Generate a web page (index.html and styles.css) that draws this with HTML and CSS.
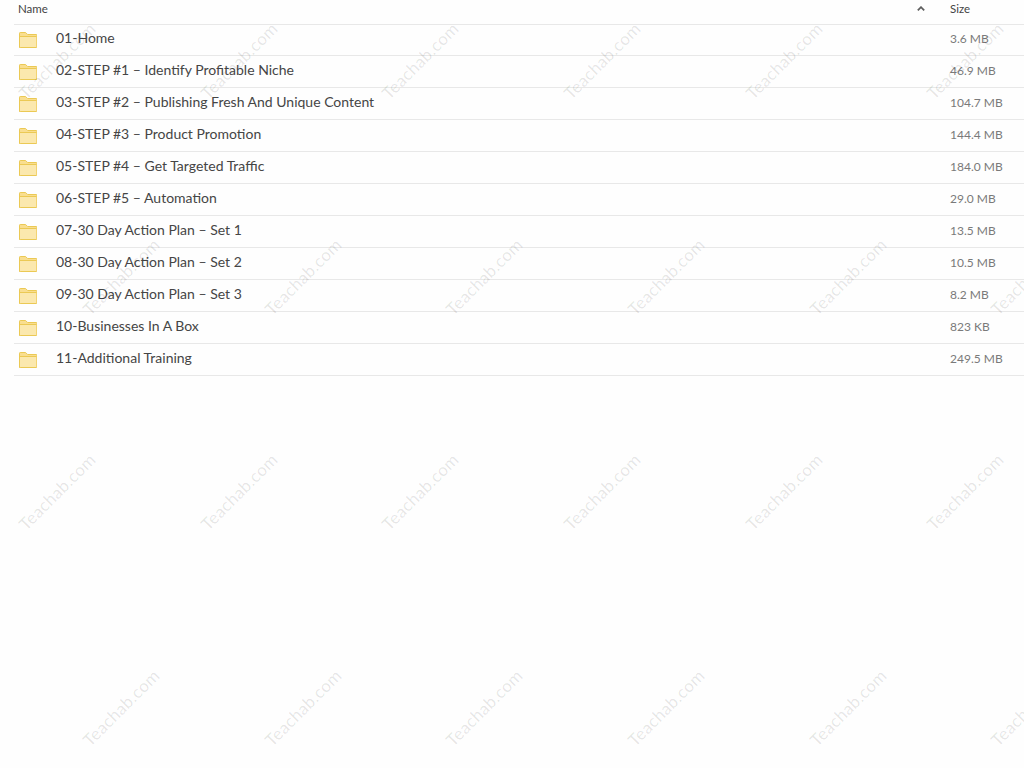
FILE: index.html
```html
<!DOCTYPE html>
<html lang="en">
<head>
<meta charset="utf-8">
<title>Files</title>
<link rel="stylesheet" href="styles.css">
</head>
<body>
<svg class="defs" width="0" height="0" aria-hidden="true">
  <symbol id="folder" viewBox="0 0 18 16">
    <path d="M.5 15.5V1.2q0-.7.7-.7h5.4l2 2h8.7q.7 0 .7.7v11.6q0 .7-.7.7H1.2q-.7 0-.7-.7z" fill="#f9de90" stroke="#ebc954"/>
    <path d="M1 4.5h16v10.5H1z" fill="#fbe8ae"/>
    <path d="M.5 4.5h17" fill="none" stroke="#ebc954"/>
  </symbol>
</svg>
<main class="table">
  <div class="head">
    <span class="name-col">Name</span>
    <svg class="sort" viewBox="0 0 8 5" aria-hidden="true"><path d="M.8 4.3 4 1.2l3.2 3.1" fill="none" stroke="#5f5f5f" stroke-width="1.8"/></svg>
    <span class="size-col">Size</span>
  </div>
  <div class="row"><svg class="icon"><use href="#folder"/></svg><span class="title">01-Home</span><span class="size">3.6 MB</span></div>
  <div class="row"><svg class="icon"><use href="#folder"/></svg><span class="title">02-STEP #1 – Identify Profitable Niche</span><span class="size">46.9 MB</span></div>
  <div class="row"><svg class="icon"><use href="#folder"/></svg><span class="title">03-STEP #2 – Publishing Fresh And Unique Content</span><span class="size">104.7 MB</span></div>
  <div class="row"><svg class="icon"><use href="#folder"/></svg><span class="title">04-STEP #3 – Product Promotion</span><span class="size">144.4 MB</span></div>
  <div class="row"><svg class="icon"><use href="#folder"/></svg><span class="title">05-STEP #4 – Get Targeted Traffic</span><span class="size">184.0 MB</span></div>
  <div class="row"><svg class="icon"><use href="#folder"/></svg><span class="title">06-STEP #5 – Automation</span><span class="size">29.0 MB</span></div>
  <div class="row"><svg class="icon"><use href="#folder"/></svg><span class="title">07-30 Day Action Plan – Set 1</span><span class="size">13.5 MB</span></div>
  <div class="row"><svg class="icon"><use href="#folder"/></svg><span class="title">08-30 Day Action Plan – Set 2</span><span class="size">10.5 MB</span></div>
  <div class="row"><svg class="icon"><use href="#folder"/></svg><span class="title">09-30 Day Action Plan – Set 3</span><span class="size">8.2 MB</span></div>
  <div class="row"><svg class="icon"><use href="#folder"/></svg><span class="title">10-Businesses In A Box</span><span class="size">823 KB</span></div>
  <div class="row"><svg class="icon"><use href="#folder"/></svg><span class="title">11-Additional Training</span><span class="size">249.5 MB</span></div>
</main>
<div class="marks" aria-hidden="true">
  <div class="mark-row odd"><span class="cell"><span class="mark">Teachab.com</span></span><span class="cell"><span class="mark">Teachab.com</span></span><span class="cell"><span class="mark">Teachab.com</span></span><span class="cell"><span class="mark">Teachab.com</span></span><span class="cell"><span class="mark">Teachab.com</span></span><span class="cell"><span class="mark">Teachab.com</span></span></div>
  <div class="mark-row even"><span class="cell"><span class="mark">Teachab.com</span></span><span class="cell"><span class="mark">Teachab.com</span></span><span class="cell"><span class="mark">Teachab.com</span></span><span class="cell"><span class="mark">Teachab.com</span></span><span class="cell"><span class="mark">Teachab.com</span></span><span class="cell"><span class="mark">Teachab.com</span></span></div>
  <div class="mark-row odd"><span class="cell"><span class="mark">Teachab.com</span></span><span class="cell"><span class="mark">Teachab.com</span></span><span class="cell"><span class="mark">Teachab.com</span></span><span class="cell"><span class="mark">Teachab.com</span></span><span class="cell"><span class="mark">Teachab.com</span></span><span class="cell"><span class="mark">Teachab.com</span></span></div>
  <div class="mark-row even"><span class="cell"><span class="mark">Teachab.com</span></span><span class="cell"><span class="mark">Teachab.com</span></span><span class="cell"><span class="mark">Teachab.com</span></span><span class="cell"><span class="mark">Teachab.com</span></span><span class="cell"><span class="mark">Teachab.com</span></span><span class="cell"><span class="mark">Teachab.com</span></span></div>
</div>
</body>
</html>
```
FILE: styles.css
```css
html, body {
  margin: 0;
  height: 100%;
  overflow: hidden;
  background: #fefefe;
  font-family: Lato, "Liberation Sans", sans-serif;
}
.defs { position: absolute; }
.table { padding-left: 14px; }
.head {
  display: flex;
  align-items: center;
  height: 24px;
  margin-bottom: -1px;
  border-bottom: 1px solid #e8e8e8;
  font-size: 11.5px;
  color: #444;
}
.name-col { margin-left: 4px; flex: 1; position: relative; top: -4px; }
.sort { width: 8px; height: 5px; margin-right: 25px; position: relative; top: -4px; }
.size-col { width: 74px; position: relative; top: -4px; }
.row {
  display: flex;
  align-items: center;
  height: 31px;
  border-bottom: 1px solid #e8e8e8;
}
.icon { width: 18px; height: 16px; margin-left: 5px; margin-right: 19px; flex: none; position: relative; top: .5px; }
.title { flex: 1; font-size: 14px; color: #454545; position: relative; top: -2px; }
.size { width: 74px; font-size: 12px; color: #7a7a7a; position: relative; top: -1px; }
.marks {
  position: absolute;
  top: 0;
  left: 0;
  width: 1024px;
  height: 768px;
  overflow: hidden;
  pointer-events: none;
  display: grid;
  grid-template-rows: repeat(4, 215.5px);
  align-content: start;
}
.mark-row { display: flex; position: relative; top: -47px; }
.mark-row.odd { margin-left: -34px; }
.mark-row.even { margin-left: 30px; }
.cell {
  flex: none;
  width: 181.7px;
  display: flex;
  align-items: center;
  justify-content: center;
}
.mark {
  transform: rotate(-45deg);
  font-size: 17px;
  letter-spacing: .3px;
  color: rgba(0, 0, 0, .1);
  white-space: nowrap;
}
```
